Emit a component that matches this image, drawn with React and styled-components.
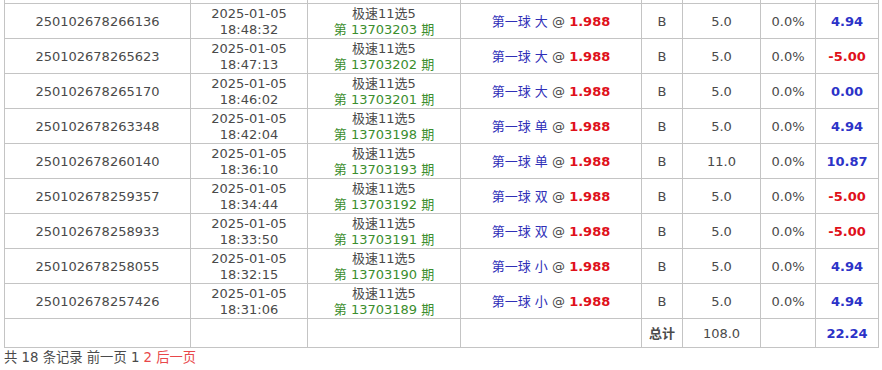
import React from "react";
import styled, { createGlobalStyle } from "styled-components";

const rows = [
  { id: "250102678266136", date: "2025-01-05", time: "18:48:32", issue: "13703203", pick: "大", amount: "5.0", result: "4.94" },
  { id: "250102678265623", date: "2025-01-05", time: "18:47:13", issue: "13703202", pick: "大", amount: "5.0", result: "-5.00" },
  { id: "250102678265170", date: "2025-01-05", time: "18:46:02", issue: "13703201", pick: "大", amount: "5.0", result: "0.00" },
  { id: "250102678263348", date: "2025-01-05", time: "18:42:04", issue: "13703198", pick: "单", amount: "5.0", result: "4.94" },
  { id: "250102678260140", date: "2025-01-05", time: "18:36:10", issue: "13703193", pick: "单", amount: "11.0", result: "10.87" },
  { id: "250102678259357", date: "2025-01-05", time: "18:34:44", issue: "13703192", pick: "双", amount: "5.0", result: "-5.00" },
  { id: "250102678258933", date: "2025-01-05", time: "18:33:50", issue: "13703191", pick: "双", amount: "5.0", result: "-5.00" },
  { id: "250102678258055", date: "2025-01-05", time: "18:32:15", issue: "13703190", pick: "小", amount: "5.0", result: "4.94" },
  { id: "250102678257426", date: "2025-01-05", time: "18:31:06", issue: "13703189", pick: "小", amount: "5.0", result: "4.94" },
];

const GlobalStyle = createGlobalStyle`
  html, body {
    margin: 0;
    padding: 0;
    background: #fff;
    overflow: hidden;
  }
  body {
    font-family: "DejaVu Sans", Verdana, "Noto Sans CJK SC", sans-serif;
    font-size: 13px;
    color: #4a4a4a;
  }
`;

const Page = styled.div`
  padding: 0 4px;
  height: 370px;
  overflow: hidden;
`;

const Table = styled.table`
  border-collapse: collapse;
  table-layout: fixed;
  width: 874px;
`;

const Cell = styled.td`
  border: 1px solid #c4c4c4;
  text-align: center;
  vertical-align: middle;
  padding: 1px 2px 0;
  height: 33px;
  line-height: 16px;
  color: #4a4a4a;
  white-space: nowrap;
  overflow: hidden;
`;

/* the row above, scrolled almost out of view */
const StubCell = styled.td`
  border: 1px solid #c4c4c4;
  border-top: none;
  padding: 0;
  height: 3px;
  font-size: 0;
  line-height: 0;
`;

const TotalCell = styled(Cell)`
  height: 27px;
  font-weight: ${(p) => (p.$bold ? "bold" : "normal")};
`;

const Issue = styled.div`
  color: #3b8e2e;
`;

const Pick = styled.span`
  color: #2f2fb8;
`;

const Odds = styled.span`
  color: #e0101a;
  font-weight: bold;
`;

const Money = styled.span`
  font-weight: bold;
  color: ${(p) => (p.$loss ? "#e0101a" : "#2c33c8")};
`;

const Pager = styled.div`
  padding-top: 1px;
  line-height: 18px;
  font-size: 13.3px;
  color: #4a4a4a;
`;

const PagerLink = styled.span`
  color: #e8474a;
`;

export default function App() {
  return (
    <Page>
      <GlobalStyle />
      <Table>
        <colgroup>
          <col style={{ width: 186 }} />
          <col style={{ width: 117 }} />
          <col style={{ width: 153 }} />
          <col style={{ width: 181 }} />
          <col style={{ width: 41 }} />
          <col style={{ width: 78 }} />
          <col style={{ width: 55 }} />
          <col style={{ width: 63 }} />
        </colgroup>
        <tbody>
          <tr>
            {Array.from({ length: 8 }, (_, i) => (
              <StubCell key={i} />
            ))}
          </tr>
          {rows.map((r) => (
            <tr key={r.id}>
              <Cell>{r.id}</Cell>
              <Cell>
                {r.date}
                <br />
                {r.time}
              </Cell>
              <Cell>
                <div>极速11选5</div>
                <Issue>第 {r.issue} 期</Issue>
              </Cell>
              <Cell>
                <Pick>第一球 {r.pick}</Pick> @ <Odds>1.988</Odds>
              </Cell>
              <Cell>B</Cell>
              <Cell>{r.amount}</Cell>
              <Cell>0.0%</Cell>
              <Cell>
                <Money $loss={r.result.startsWith("-")}>{r.result}</Money>
              </Cell>
            </tr>
          ))}
          <tr>
            <TotalCell />
            <TotalCell />
            <TotalCell />
            <TotalCell />
            <TotalCell $bold>总计</TotalCell>
            <TotalCell>108.0</TotalCell>
            <TotalCell />
            <TotalCell>
              <Money>22.24</Money>
            </TotalCell>
          </tr>
        </tbody>
      </Table>
      <Pager>
        共 18 条记录 前一页 1 <PagerLink>2 后一页</PagerLink>
      </Pager>
    </Page>
  );
}
